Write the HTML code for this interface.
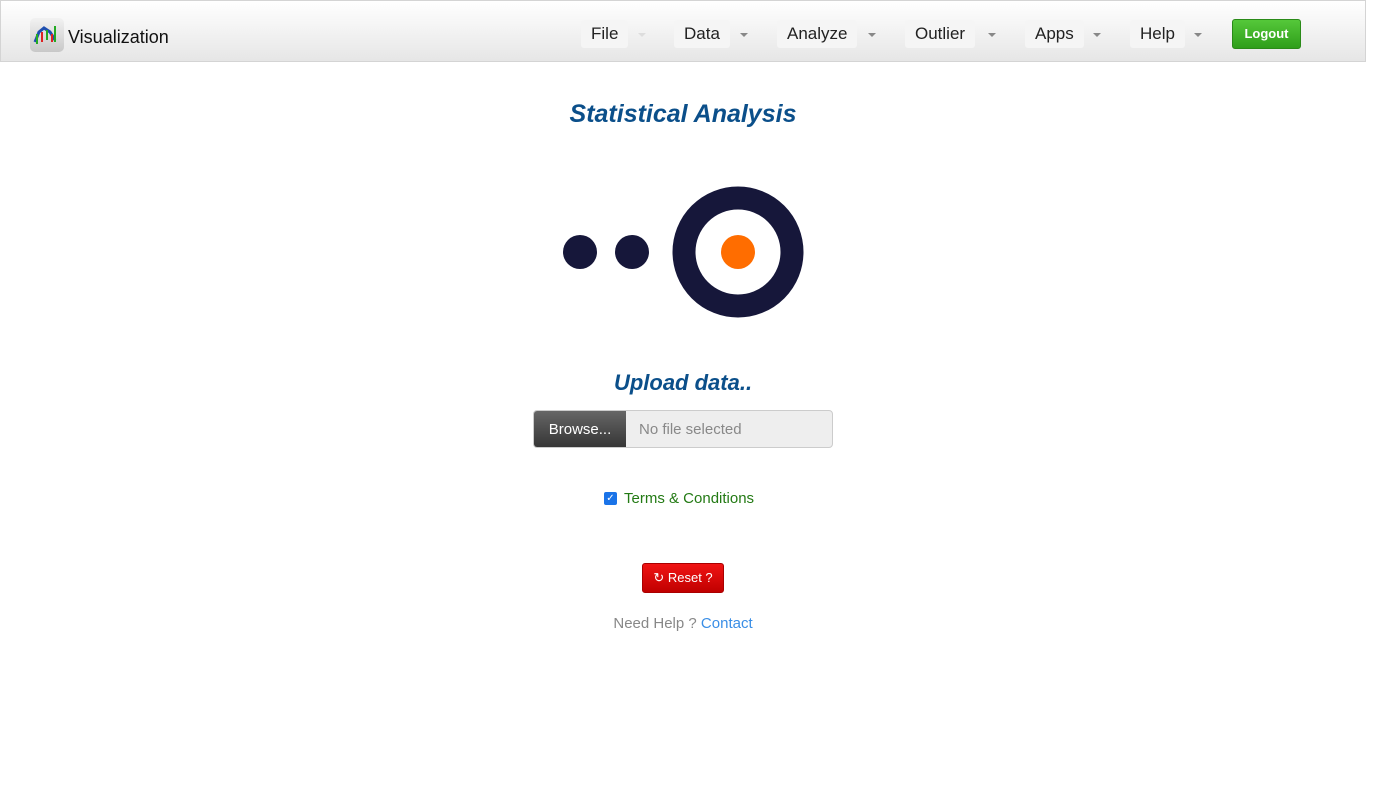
<!DOCTYPE html>
<html><head><style>
*{box-sizing:border-box;margin:0;padding:0}
body{width:1400px;height:788px;background:#fff;font-family:"Liberation Sans",sans-serif;position:relative;overflow:hidden}
.nav{position:absolute;left:0;top:0;width:1366px;height:62px;border:1px solid #d4d4d4;background:linear-gradient(#fff,#e6e6e6)}
.logo{position:absolute;left:29px;top:17px;width:34px;height:34px;border-radius:5px;background:linear-gradient(#f2f2f2,#c8c8c8)}
.brand{position:absolute;left:67px;top:26px;font-size:18px;color:#111}
.item{position:absolute;top:19px;height:28px;background:#f5f5f5;border-radius:3px;font-size:17px;color:#222;padding:4px 10px 0}
.car{position:absolute;top:32px;width:0;height:0;border-left:4px solid transparent;border-right:4px solid transparent;border-top:4px solid #888}
.logout{position:absolute;left:1231px;top:18px;width:69px;height:30px;background:linear-gradient(#55c83a,#2f9e1a);border:1px solid #2a8a18;border-radius:3px;color:#fff;font-weight:bold;font-size:13px;text-align:center;line-height:28px}
h1{position:absolute;left:0;width:1366px;text-align:center;color:#0b4f8a;font-style:italic;font-weight:bold}
</style></head><body>
<div class="nav">
<div class="logo"><svg width="34" height="34" viewBox="0 0 34 34"><path d="M5 24 L9 14 L14 10 L20 14 L25 22" stroke="#1e4fb0" stroke-width="3" fill="none"/><rect x="6" y="16" width="2" height="10" fill="#2a2"/><rect x="11" y="14" width="2" height="10" fill="#d22"/><rect x="16" y="12" width="2" height="10" fill="#2a2"/><rect x="24" y="8" width="2" height="16" fill="#2a2"/><rect x="21" y="16" width="2" height="8" fill="#d22"/></svg></div>
<div class="brand">Visualization</div>
<div class="item" style="left:580px">File</div><div class="car" style="left:637px;border-top-color:#ddd"></div>
<div class="item" style="left:673px">Data</div><div class="car" style="left:739px"></div>
<div class="item" style="left:776px">Analyze</div><div class="car" style="left:867px"></div>
<div class="item" style="left:904px">Outlier</div><div class="car" style="left:987px"></div>
<div class="item" style="left:1024px">Apps</div><div class="car" style="left:1092px"></div>
<div class="item" style="left:1129px">Help</div><div class="car" style="left:1193px"></div>
<div class="logout">Logout</div>
</div>
<h1 style="top:100px;font-size:25px">Statistical Analysis</h1>
<svg style="position:absolute;left:550px;top:180px" width="270" height="145">
<circle cx="30" cy="72" r="17" fill="#16173a"/><circle cx="82" cy="72" r="17" fill="#16173a"/>
<circle cx="188" cy="72" r="54" fill="none" stroke="#16173a" stroke-width="23"/>
<circle cx="188" cy="72" r="17" fill="#ff6d00"/></svg>
<h1 style="top:370px;font-size:22px">Upload data..</h1>
<div style="position:absolute;left:533px;top:410px;width:300px;height:38px;border:1px solid #ccc;border-radius:4px;background:#eee;overflow:hidden">
<div style="position:absolute;left:0;top:0;width:92px;height:38px;background:linear-gradient(#666,#333);color:#fff;font-size:15px;line-height:38px;text-align:center">Browse...</div>
<div style="position:absolute;left:105px;top:10px;font-size:15px;color:#888">No file selected</div></div>
<div style="position:absolute;left:604px;top:492px;width:13px;height:13px;background:#1a73e8;border-radius:2px;color:#fff;font-size:10px;line-height:13px;text-align:center">✓</div>
<div style="position:absolute;left:624px;top:490px;font-size:15px;color:#237a14">Terms &amp; Conditions</div>
<div style="position:absolute;left:642px;top:563px;width:82px;height:30px;background:linear-gradient(#f01414,#c00000);border:1px solid #a00;border-radius:3px;color:#fff;font-size:13px;text-align:center;line-height:28px">↻ Reset ?</div>
<div style="position:absolute;left:0;width:1366px;top:615px;text-align:center;font-size:15px;color:#888">Need Help ? <span style="color:#3a8ee6">Contact</span></div>
</body></html>
